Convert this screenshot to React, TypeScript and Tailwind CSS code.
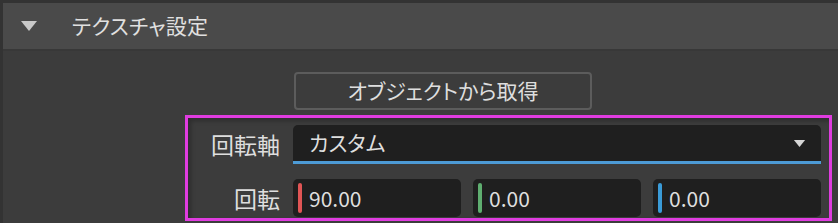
import React from "react";

const font = "[font-family:'Noto_Sans_CJK_JP','Noto_Sans',sans-serif] [font-feature-settings:'palt']";

function Triangle({ className }: { className?: string }) {
  return (
    <svg viewBox="0 0 16 10" className={className} fill="currentColor">
      <polygon points="0,0 16,0 8,10" />
    </svg>
  );
}

function VecField({ value, bar }: { value: string; bar: string }) {
  return (
    <div className="flex h-[38px] flex-1 items-center rounded-[5px] bg-[#1f1f1f] pl-[5px]">
      <span className={`h-[30px] w-[4px] rounded-full ${bar}`} />
      <span className="ml-[7px] text-[21px] leading-none text-[#dedede]">{value}</span>
    </div>
  );
}

export default function App() {
  return (
    <div className={`h-[223px] w-[838px] overflow-hidden bg-[#333333] pl-[3px] pt-[3px] ${font}`}>
      <div className="flex h-full flex-col bg-[#3c3c3c]">
        {/* header */}
        <div className="flex h-[48px] items-center border-b-2 border-[#383838] bg-[#4a4a4a]">
          <Triangle className="ml-[18px] h-[10px] w-[16px] text-[#c9c9c9]" />
          <span className="ml-[35px] text-[21px] tracking-[0.3px] text-[#e0e0e0]">テクスチャ設定</span>
        </div>

        {/* button */}
        <div className="mt-[21px] pl-[291px]">
          <button className="flex h-[38px] w-[298px] items-center justify-center rounded-[4px] border-2 border-[#5c5c5c] text-[21px] text-[#dedede]">
            オブジェクトから取得
          </button>
        </div>

        {/* highlighted rows */}
        <div className="ml-[182px] mr-[6px] mt-[5px] flex flex-col border-[3px] border-[#e03ce0] pb-[1px] pr-[8px] pt-[7px] shadow-[inset_3px_3px_4px_rgba(0,0,0,0.25)]">
          <div className="flex items-center">
            <div className="w-[93px] pr-[1px] text-right text-[23px] text-[#dedede]">回転軸</div>
            <div className="ml-[12px] flex h-[39px] flex-1 items-center justify-between rounded-t-[5px] border-b-[3px] border-[#4d9bd6] bg-[#1f1f1f] pl-[16px] pr-[14px]">
              <span className="text-[21px] text-[#dedede]">カスタム</span>
              <Triangle className="h-[7px] w-[15px] text-[#d6d6d6]" />
            </div>
          </div>
          <div className="mt-[15px] flex items-center">
            <div className="w-[93px] pr-[1px] text-right text-[23px] text-[#dedede]">回転</div>
            <div className="ml-[12px] flex flex-1 gap-[12px]">
              <VecField value="90.00" bar="bg-[#e05555]" />
              <VecField value="0.00" bar="bg-[#5fae70]" />
              <VecField value="0.00" bar="bg-[#3a9bd8]" />
            </div>
          </div>
        </div>
      </div>
    </div>
  );
}
